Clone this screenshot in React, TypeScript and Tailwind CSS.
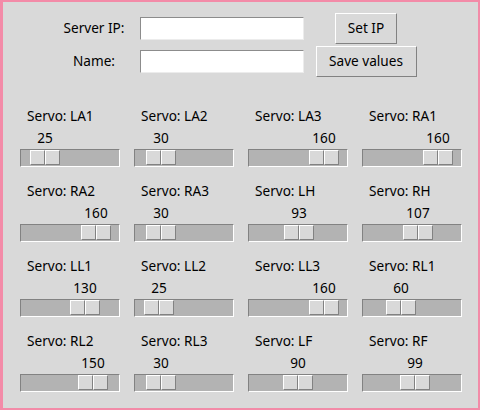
const servos: [string, number][] = [
  ["LA1", 25],
  ["LA2", 30],
  ["LA3", 160],
  ["RA1", 160],
  ["RA2", 160],
  ["RA3", 30],
  ["LH", 93],
  ["RH", 107],
  ["LL1", 130],
  ["LL2", 25],
  ["LL3", 160],
  ["RL1", 60],
  ["RL2", 150],
  ["RL3", 30],
  ["LF", 90],
  ["RF", 99],
];

function ServoScale({ name, value }: { name: string; value: number }) {
  // thumb travel inside the trough, range 0..180
  const left = Math.round(1 + (value / 180) * 68);

  return (
    <div className="w-[100px]">
      <div className="h-[18px] pl-[7px] leading-[18px]">Servo: {name}</div>
      <div className="relative h-[24px]">
        <span
          className="absolute top-[4px] -translate-x-1/2 leading-[18px]"
          style={{ left: left + 15 }}
        >
          {value}
        </span>
      </div>
      <div className="relative h-[18px] bg-[#b3b3b3] border-t border-l border-[#828282] border-b-white border-r-white border-b border-r">
        <div
          className="absolute top-0 flex h-[15px] w-[30px] bg-[#d9d9d9]"
          style={{ left: left - 1 }}
        >
          <div className="w-[15px] border-t border-l border-white border-r border-r-[#828282] border-b border-b-[#828282]" />
          <div className="w-[15px] border-t border-l border-white border-r border-r-[#828282] border-b border-b-[#828282]" />
        </div>
      </div>
    </div>
  );
}

function App() {
  return (
    <div className="h-[410px] w-[480px] bg-[#f38ba8] pt-[2px] pr-[2px] pb-[2px] pl-[3px]">
      <div
        className="h-full w-full bg-[#d9d9d9] text-[13.6px] text-black"
        style={{ fontFamily: '"Noto Sans", sans-serif' }}
      >
        <div className="flex flex-col gap-[2px] pt-[11px]">
          <div className="flex h-[31px] items-center">
            <div className="w-[45px]" />
            <div className="w-[92px] text-center">Server IP:</div>
            <input className="h-[23px] w-[164px] bg-white border-t border-l border-[#8c8c8c] border-b-[#ececec] border-r-[#ececec] border-b border-r outline-none" />
            <div className="flex w-[124px] justify-center">
              <button className="h-[31px] w-[62px] bg-[#d9d9d9] border-t border-l border-white border-b border-r border-b-[#828282] border-r-[#828282]">
                Set IP
              </button>
            </div>
          </div>
          <div className="flex h-[31px] items-center">
            <div className="w-[45px]" />
            <div className="w-[92px] text-center">Name:</div>
            <input className="h-[23px] w-[164px] bg-white border-t border-l border-[#8c8c8c] border-b-[#ececec] border-r-[#ececec] border-b border-r outline-none" />
            <div className="flex w-[124px] justify-center">
              <button className="h-[31px] w-[101px] bg-[#d9d9d9] border-t border-l border-white border-b border-r border-b-[#828282] border-r-[#828282]">
                Save values
              </button>
            </div>
          </div>
        </div>

        <div className="grid grid-cols-[100px_100px_100px_100px] gap-x-[14px] gap-y-[15px] pl-[17px] pt-[30px]">
          {servos.map(([name, value]) => (
            <ServoScale key={name} name={name} value={value} />
          ))}
        </div>
      </div>
    </div>
  );
}

export default App;
